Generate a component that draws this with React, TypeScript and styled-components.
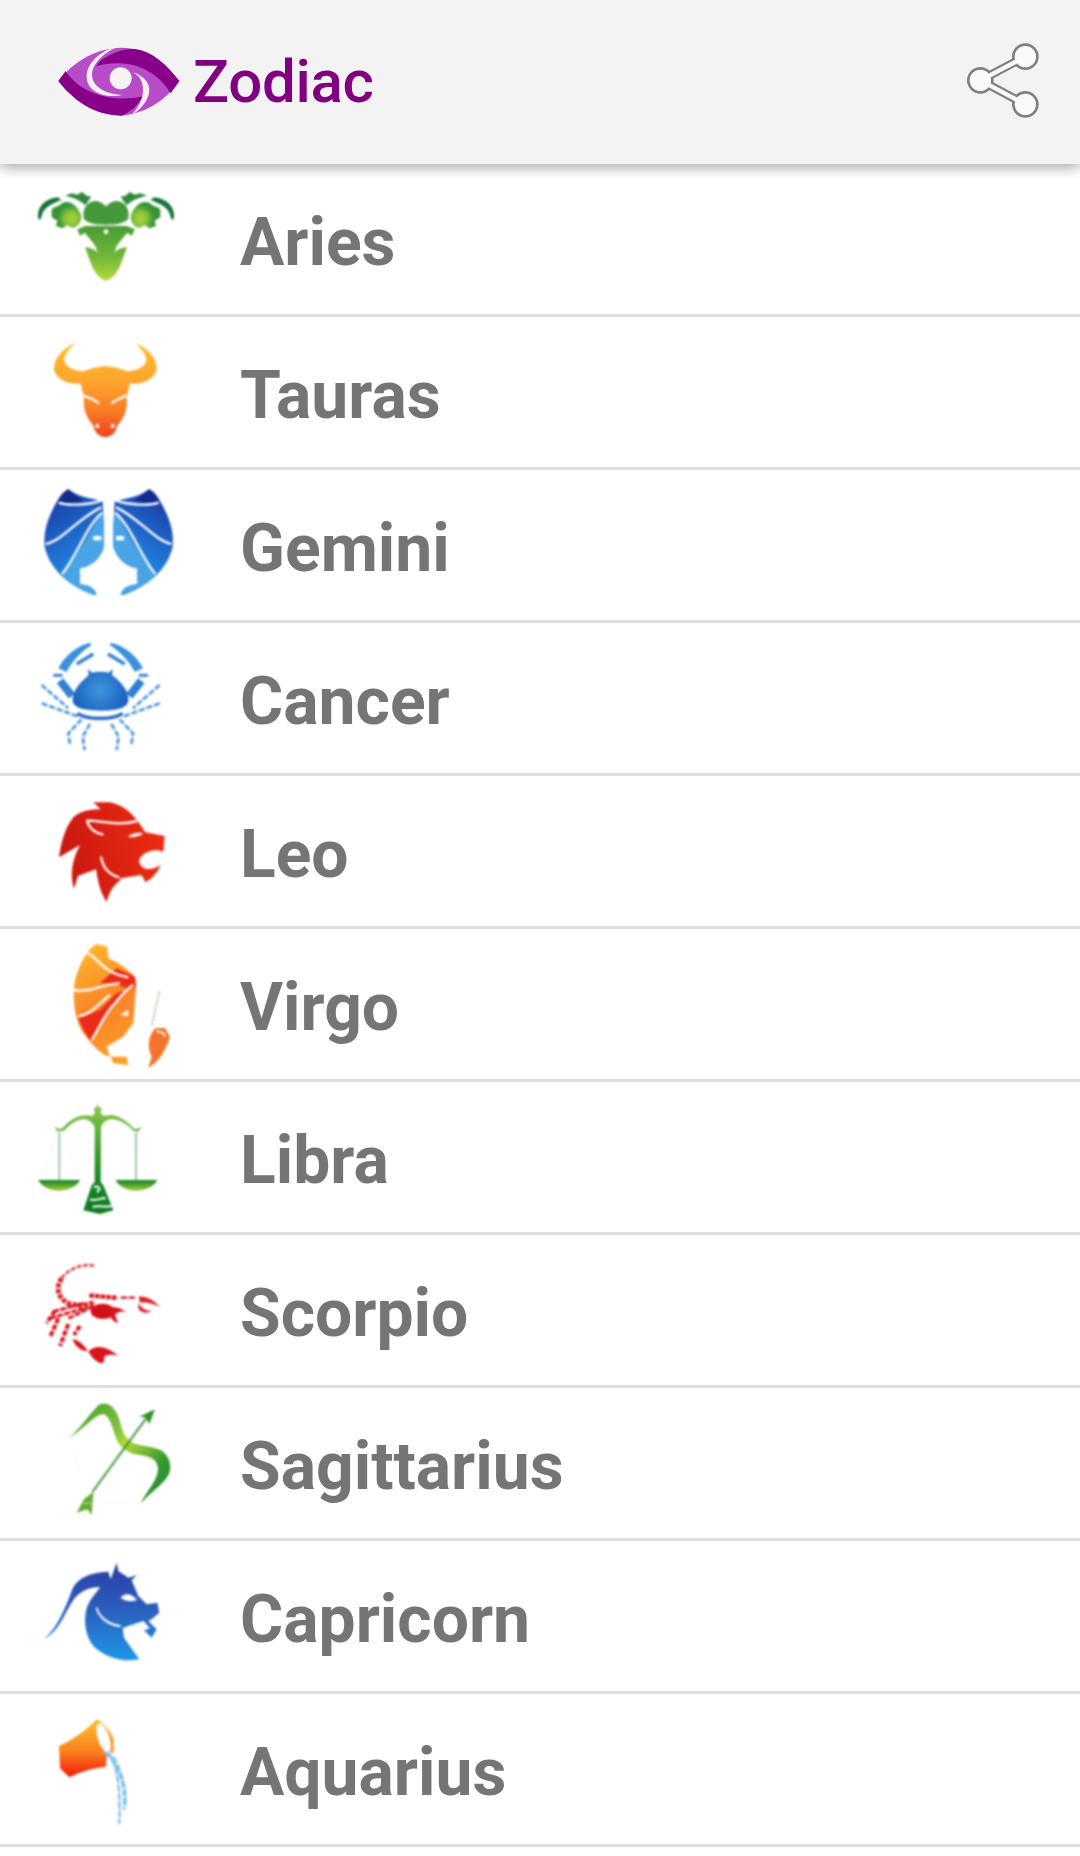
import React from 'react';
import styled, { createGlobalStyle } from 'styled-components';

const Global = createGlobalStyle`
  html, body { margin: 0; padding: 0; background: #fff; }
  body { font-family: Roboto, "Liberation Sans", sans-serif; }
`;
const Page = styled.div`
  width: 1080px;
  height: 1856px;
  overflow: hidden;
  background: #fff;
`;
const Header = styled.header`
  position: relative;
  z-index: 1;
  height: 164px;
  box-sizing: border-box;
  padding: 0 41px 4px 50px;
  display: flex;
  align-items: center;
  background: #f3f3f3;
  box-shadow: 0 4px 12px rgba(0, 0, 0, 0.32);
`;
const Logo = styled.svg`
  width: 140px;
  height: 90px;
  flex: none;
  filter: blur(0.4px);
`;
const Title = styled.h1`
  margin: 0 0 0 3px;
  padding-top: 4px;
  font-size: 60px;
  line-height: 70px;
  font-weight: 500;
  letter-spacing: -0.3px;
  color: #800080;
`;
const Share = styled.svg`
  width: 72px;
  height: 75px;
  margin-left: auto;
  flex: none;
  filter: blur(0.5px);
`;
const List = styled.ul`
  list-style: none;
  margin: 0;
  padding: 0;
`;
const Row = styled.li`
  height: 150px;
  display: flex;
  align-items: center;
  border-bottom: 3px solid #dedede;
`;
const Sign = styled.svg`
  width: 232px;
  height: 150px;
  flex: none;
  filter: blur(0.8px);
`;
const Label = styled.span`
  margin-left: 8px;
  padding-top: 7px;
  font-size: 66px;
  font-weight: 700;
  line-height: 78px;
  color: #757575;
`;

const V = (view: string, children: React.ReactNode) => (
  <Sign viewBox={view}>{children}</Sign>
);

const Aries = () => V('-60 0 696 450', <>
  <defs>
    <linearGradient id="ar" x1="0" y1="100" x2="0" y2="350" gradientUnits="userSpaceOnUse">
      <stop offset="0" stopColor="#2f8f3a" />
      <stop offset="0.35" stopColor="#4a9c36" />
      <stop offset="0.7" stopColor="#6fb538" />
      <stop offset="1" stopColor="#b2dc3a" />
    </linearGradient>
    <radialGradient id="are" cx="155" cy="164" r="42" gradientUnits="userSpaceOnUse">
      <stop offset="0" stopColor="#a6d63a" />
      <stop offset="0.45" stopColor="#8cc63a" />
      <stop offset="1" stopColor="#349436" />
    </radialGradient>
    <g id="arh">
      <path d="M55 166C48 130 75 104 112 100L126 108C98 116 74 132 68 146L62 166Z" fill="#15733a" />
      <path d="M135 95L155 88L172 92L186 84L200 95L214 98L196 124C180 108 160 100 135 95Z" fill="#2d8a3c" />
      <path d="M95 136C105 126 115 130 125 118C150 106 170 124 182 150C188 170 176 186 160 192L140 184L128 193L108 186L112 170L95 160Z" fill="url(#are)" />
      <path d="M260 130C246 114 226 104 206 118C190 130 188 150 192 166C206 180 230 182 260 182Z" fill="#46993a" />
      <path d="M260 186H196L172 196L180 216L194 206L214 230L226 246L236 276L260 276Z" fill="url(#ar)" />
      <path d="M195 250C216 250 232 262 238 276L260 270L260 350C236 346 220 320 210 290Z" fill="url(#ar)" />
    </g>
  </defs>
  <use href="#arh" />
  <use href="#arh" transform="translate(516 0) scale(-1 1)" />
  <circle cx="258" cy="203" r="7" fill="#fff" />
</>);

const Tauras = () => V('0 -9 696 450', <>
  <defs>
    <linearGradient id="ta" x1="0" y1="70" x2="0" y2="352" gradientUnits="userSpaceOnUse">
      <stop offset="0" stopColor="#ffbd2e" />
      <stop offset="0.4" stopColor="#fda62c" />
      <stop offset="0.7" stopColor="#f97f28" />
      <stop offset="1" stopColor="#f0421c" />
    </linearGradient>
    <path id="tah" d="M322 139C290 139 268 148 250 154C222 152 194 140 193 120C193 104 208 86 226 68C186 86 160 116 162 150C170 180 210 196 242 190L248 216L252 232C248 262 256 290 280 316C284 342 300 352 322 352Z" fill="url(#ta)" />
  </defs>
  <use href="#tah" />
  <use href="#tah" transform="translate(632 0) scale(-1 1)" />
  <path d="M250 226C268 232 284 240 298 250M382 226C364 232 348 240 334 250" fill="none" stroke="#fff" strokeWidth="7" />
  <circle cx="292" cy="318" r="6" fill="#fff" />
  <circle cx="338" cy="318" r="6" fill="#fff" />
</>);

const Gemini = () => V('0 450 696 450', <>
  <defs>
    <linearGradient id="ge" x1="140" y1="520" x2="300" y2="780" gradientUnits="userSpaceOnUse">
      <stop offset="0" stopColor="#1a35a0" />
      <stop offset="0.55" stopColor="#1f6fd0" />
      <stop offset="1" stopColor="#1f9ae6" />
    </linearGradient>
    <g id="geh">
      <path d="M308 545C280 535 240 535 205 508C188 516 172 540 160 565C140 605 130 640 134 680C146 735 190 790 280 825L290 825C285 800 262 796 240 792L240 745C270 740 300 720 312 680L312 620Z" fill="url(#ge)" />
      <path d="M308 575C270 630 240 700 186 765C210 790 240 812 285 825C285 800 262 796 240 792L240 745C270 740 300 720 312 680L312 620Z" fill="#4aa3e4" />
      <path d="M205 508C188 516 178 532 172 546C210 552 240 545 250 540C230 535 222 520 205 508Z" fill="#122a8c" />
      <path d="M176 548C205 558 265 555 304 542M138 672C190 660 240 590 304 562M186 762C230 710 258 620 306 578" fill="none" stroke="#fff" strokeWidth="7" />
      <rect x="280" y="648" width="24" height="13" fill="#fff" />
    </g>
  </defs>
  <use href="#geh" />
  <use href="#geh" transform="translate(652 0) scale(-1 1)" />
</>);

const Cancer = () => V('0 909 696 450', <>
  <defs>
    <radialGradient id="ca" cx="300" cy="1110" r="85" gradientUnits="userSpaceOnUse">
      <stop offset="0" stopColor="#3f96dd" />
      <stop offset="1" stopColor="#1a60c2" />
    </radialGradient>
    <g id="cah">
      <path d="M272 968C235 975 195 1005 175 1045L200 1056C210 1034 240 996 274 976Z" fill="#3a8fdc" />
      <path d="M230 1032L280 1002" stroke="#2f80d2" strokeWidth="10" fill="none" />
      <path d="M160 1066H188" stroke="#3a86d6" strokeWidth="9" />
      <path d="M180 1082L216 1128" stroke="#2f80d2" strokeWidth="24" />
      <path d="M125 1095L205 1165M125 1150L235 1190M245 1198L205 1240L210 1275M270 1212L248 1250L254 1290" stroke="#4a94dc" strokeWidth="8" strokeDasharray="18 6" fill="none" />
    </g>
  </defs>
  <use href="#cah" />
  <use href="#cah" transform="translate(604 0) scale(-1 1)" />
  <path d="M264 1047L276 1058C290 1054 312 1054 326 1058L338 1047L336 1065C362 1085 386 1110 385 1140C384 1168 340 1172 300 1172C260 1172 216 1166 218 1138C220 1108 244 1084 266 1066Z" fill="url(#ca)" />
  <path d="M232 1180C260 1200 340 1200 368 1180" stroke="#1f66c4" strokeWidth="10" fill="none" />
</>);

const Leo = () => V('0 18 696 450', <>
  <defs>
    <linearGradient id="le" x1="180" y1="250" x2="490" y2="200" gradientUnits="userSpaceOnUse">
      <stop offset="0" stopColor="#c91710" />
      <stop offset="1" stopColor="#ec2c12" />
    </linearGradient>
  </defs>
  <path d="M280 97L330 97C370 105 395 130 415 155L436 187L494 198L490 246C462 232 420 250 417 275C424 298 450 306 482 285C472 310 452 330 436 336L425 315L362 325L360 332C340 345 326 370 320 396C305 375 295 345 288 298L234 318L222 356C210 320 214 272 240 225L177 262C182 230 190 180 220 142C240 125 265 118 302 118Z" fill="url(#le)" />
  <path d="M260 152C300 150 350 170 412 153M260 152C268 175 285 190 310 194M303 260C308 292 328 314 358 323" fill="none" stroke="#fff" strokeWidth="7" />
  <path d="M384 200C395 190 415 186 430 190C420 200 400 204 384 200Z" fill="#fff" />
</>);

const Virgo = () => V('0 477 696 450', <>
  <defs>
    <linearGradient id="vi" x1="230" y1="560" x2="400" y2="860" gradientUnits="userSpaceOnUse">
      <stop offset="0" stopColor="#ffb22c" />
      <stop offset="0.5" stopColor="#f98329" />
      <stop offset="1" stopColor="#fba128" />
    </linearGradient>
  </defs>
  <path d="M290 522C262 535 240 580 225 630C215 690 225 750 250 790C280 830 310 860 332 860L340 880L385 885L380 860L330 860L320 830L370 800L400 760L408 650L405 620C380 595 350 575 325 565L322 530Z" fill="url(#vi)" />
  <path d="M350 595L405 620L408 650L350 670L300 720L236 745C245 770 258 795 272 812L325 725L380 655L340 640L300 640Z" fill="#ec2a18" />
  <path d="M262 550C295 560 305 610 385 622M222 660C270 670 310 640 360 640M235 738C270 738 290 705 330 675M275 810C300 770 320 720 345 700C360 680 375 660 400 645" fill="none" stroke="#fff" strokeWidth="7" />
  <path d="M360 735L385 720V738Z" fill="#fff" />
  <path d="M478 665C470 700 462 735 455 770" fill="none" stroke="#c9c2b6" strokeWidth="7" strokeDasharray="7 5" />
  <path d="M465 775L495 774L510 800C495 850 470 880 445 893L455 860C440 830 445 800 465 775Z" fill="#f4732a" />
  <path d="M470 782C480 790 495 785 495 800" fill="none" stroke="#fff" strokeWidth="5" />
</>);

const Libra = () => V('0 0 696 450', <>
  <defs>
    <linearGradient id="li" x1="0" y1="70" x2="0" y2="395" gradientUnits="userSpaceOnUse">
      <stop offset="0" stopColor="#8fc94a" />
      <stop offset="0.3" stopColor="#54a838" />
      <stop offset="0.65" stopColor="#188a25" />
      <stop offset="1" stopColor="#0f7a22" />
    </linearGradient>
    <linearGradient id="lp" x1="0" y1="295" x2="0" y2="325" gradientUnits="userSpaceOnUse">
      <stop offset="0" stopColor="#168425" />
      <stop offset="1" stopColor="#9ccb38" />
    </linearGradient>
  </defs>
  <path d="M162 132C170 140 182 146 192 134C210 112 240 98 262 100C272 102 280 104 285 92L281 78L290 76L293 64L297 76L306 78L302 92C308 104 318 102 330 99C352 96 380 118 396 134C406 146 418 140 426 132L416 148L400 146C384 126 350 108 330 112C316 116 308 122 303 136L302 300L310 310L340 385L300 396L250 385L275 310L284 300L284 136C278 122 270 116 256 112C238 108 208 126 192 146L172 148Z" fill="url(#li)" />
  <path d="M282 315C298 310 305 322 290 330M270 352C290 360 320 340 312 352M278 375C295 368 320 378 335 372" fill="none" stroke="#fff" strokeWidth="6" />
  <path d="M178 150V295M408 150V295" stroke="#90ba95" strokeWidth="5" fill="none" />
  <path d="M175 155L120 290M181 155L240 290M405 155L350 290M411 155L470 290" stroke="#d4e6d4" strokeWidth="2" strokeDasharray="5 6" fill="none" />
  <path d="M115 294H240C232 314 202 326 176 326C150 326 124 314 115 294Z" fill="url(#lp)" />
  <path d="M347 294H472C464 314 434 326 408 326C382 326 356 314 347 294Z" fill="url(#lp)" />
</>);

const Scorpio = () => V('0 45 696 450', <>
  <path d="M282 137C250 130 205 145 185 175" fill="none" stroke="#e0454b" strokeWidth="8" strokeDasharray="14 5" />
  <path d="M185 175C165 205 175 235 205 250C225 258 255 258 285 246" fill="none" stroke="#d9232b" strokeWidth="15" strokeDasharray="13 4" />
  <path d="M160 275L250 250M150 295L262 262M205 295L282 258" fill="none" stroke="#d8141c" strokeWidth="9" strokeDasharray="18 4" />
  <path d="M165 272L140 310M175 295L150 352M205 312L180 378M240 318L222 345" fill="none" stroke="#d8141c" strokeWidth="12" strokeDasharray="16 5" />
  <path d="M268 226L352 234" fill="none" stroke="#d9141c" strokeWidth="13" strokeDasharray="14 3" />
  <path d="M362 233L405 233" fill="none" stroke="#d9141c" strokeWidth="7" strokeDasharray="20 4" />
  <ellipse cx="308" cy="274" rx="36" ry="23" fill="#d0101a" />
  <path d="M335 262C350 260 365 266 380 277C365 272 352 276 345 285C350 295 352 305 355 310C340 305 330 295 325 280Z" fill="#d9141c" />
  <path d="M416 230C445 228 465 245 480 262C460 250 440 246 420 248ZM415 250C425 265 440 275 455 272C440 282 422 280 415 265Z" fill="#dc2228" />
  <path d="M218 358C235 358 252 375 264 394C245 394 224 380 218 358Z" fill="#d9141c" />
  <path d="M265 395C285 372 320 378 355 408C330 400 315 405 312 412C315 420 312 428 305 430C285 425 275 410 265 395Z" fill="#d9141c" />
</>);

const Sagittarius = () => V('0 504 696 450', <>
  <defs>
    <linearGradient id="sa" x1="205" y1="560" x2="503" y2="850" gradientUnits="userSpaceOnUse">
      <stop offset="0" stopColor="#3f9a2e" />
      <stop offset="0.35" stopColor="#7cc03a" />
      <stop offset="0.48" stopColor="#b0d83a" />
      <stop offset="0.75" stopColor="#3a9a30" />
      <stop offset="1" stopColor="#168a2c" />
    </linearGradient>
  </defs>
  <path d="M205 656C245 622 268 582 295 556C312 544 334 550 350 578C365 608 362 640 389 662C412 680 445 675 482 690C504 704 516 730 509 755C499 790 450 815 422 852C440 810 468 790 474 750C474 724 458 710 425 706C390 702 360 690 347 652C338 622 330 594 315 584C290 576 260 622 205 656Z" fill="url(#sa)" />
  <path d="M278 815L442 590" stroke="#2f8e2a" strokeWidth="7" strokeDasharray="8 2" fill="none" />
  <path d="M465 568L448 612L436 592L418 590Z" fill="#2f8e2a" />
  <path d="M230 878L252 838L280 815L275 885L262 868Z" fill="#63ac32" />
  <path d="M205 660L250 800M250 850H420" stroke="#f6f9f2" strokeWidth="2" fill="none" />
</>);

const Capricorn = () => V('0 0 696 450', <>
  <defs>
    <linearGradient id="cp" x1="0" y1="70" x2="0" y2="358" gradientUnits="userSpaceOnUse">
      <stop offset="0" stopColor="#2b3ea6" />
      <stop offset="0.45" stopColor="#2b5dbc" />
      <stop offset="1" stopColor="#1e98e8" />
    </linearGradient>
  </defs>
  <path d="M133 293C170 262 195 205 215 150C230 110 270 95 325 92L332 115L350 65L355 90L385 110L410 103L395 118L415 165L440 190L472 185L478 215L455 235L445 240L470 265L455 290L432 268L450 262L430 240L385 255L368 262L372 290L418 355C370 365 320 350 285 320C260 295 250 250 258 210C265 180 280 165 300 140C280 135 250 145 225 170C195 210 180 270 133 293Z" fill="url(#cp)" />
  <path d="M362 170C372 155 395 155 412 178C395 182 375 182 362 170Z" fill="#fff" />
  <path d="M290 200C295 225 320 250 362 256" fill="none" stroke="#fff" strokeWidth="6" />
</>);

const Aquarius = () => V('0 162 696 450', <>
  <defs>
    <linearGradient id="aq" x1="0" y1="240" x2="0" y2="412" gradientUnits="userSpaceOnUse">
      <stop offset="0" stopColor="#ffbd2a" />
      <stop offset="0.55" stopColor="#f9811f" />
      <stop offset="1" stopColor="#f5160c" />
    </linearGradient>
  </defs>
  <path d="M177 318C220 300 265 265 292 237C315 255 335 275 341 300L340 342L322 325L318 380C280 385 240 395 208 412L180 385Z" fill="url(#aq)" />
  <ellipse cx="311" cy="294" rx="17" ry="46" transform="rotate(-18 311 294)" fill="#fff" />
  <path d="M312 335C350 370 378 420 372 510M324 335C350 375 362 430 358 552M340 350C365 395 380 440 376 500" fill="none" stroke="#7cc0ee" strokeWidth="7" strokeDasharray="22 4" />
</>);

const signs: [string, React.FC][] = [
  ['Aries', Aries], ['Tauras', Tauras], ['Gemini', Gemini], ['Cancer', Cancer],
  ['Leo', Leo], ['Virgo', Virgo], ['Libra', Libra], ['Scorpio', Scorpio],
  ['Sagittarius', Sagittarius], ['Capricorn', Capricorn], ['Aquarius', Aquarius],
];

export default function App() {
  return (
    <Page>
      <Global />
      <Header>
        <Logo viewBox="0 0 420 270">
          <path d="M25 138C75 75 140 40 215 38C290 38 345 85 388 138C350 190 300 232 215 242C130 240 70 195 25 138Z" fill="#b84bc8" />
          <path d="M150 78C190 50 225 40 255 42C305 48 350 88 388 138L362 175C330 120 270 85 205 85C180 85 155 88 138 95Z" fill="#880088" />
          <path d="M25 138L47 108C80 160 140 185 200 190C230 192 255 190 278 184C265 210 245 230 215 242C130 240 70 195 25 138Z" fill="#880088" />
          <circle cx="212" cy="130" r="33" fill="#f6f2f6" />
          <path d="M208 33C150 45 110 85 110 125C110 168 160 192 218 180C175 178 128 160 126 120C126 85 165 50 208 33Z" fill="#f6eff6" />
          <path d="M250 112C287 125 304 150 296 180C287 205 270 225 245 240C265 215 279 195 279 165C279 140 270 125 250 112Z" fill="#f6eff6" />
        </Logo>
        <Title>Zodiac</Title>
        <Share viewBox="200 127 216 223">
          <path d="M240 238L375 167M240 238L375 310" stroke="#808080" strokeWidth="26" fill="none" />
          <circle cx="375" cy="167" r="40" fill="#808080" />
          <circle cx="240" cy="238" r="40" fill="#808080" />
          <circle cx="375" cy="310" r="40" fill="#808080" />
          <path d="M240 238L375 167M240 238L375 310" stroke="#fafafa" strokeWidth="13" fill="none" />
          <circle cx="375" cy="167" r="32" fill="#fafafa" />
          <circle cx="240" cy="238" r="32" fill="#fafafa" />
          <circle cx="375" cy="310" r="32" fill="#fafafa" />
        </Share>
      </Header>
      <List>
        {signs.map(([name, Icon]) => (
          <Row key={name}>
            <Icon />
            <Label>{name}</Label>
          </Row>
        ))}
      </List>
    </Page>
  );
}
